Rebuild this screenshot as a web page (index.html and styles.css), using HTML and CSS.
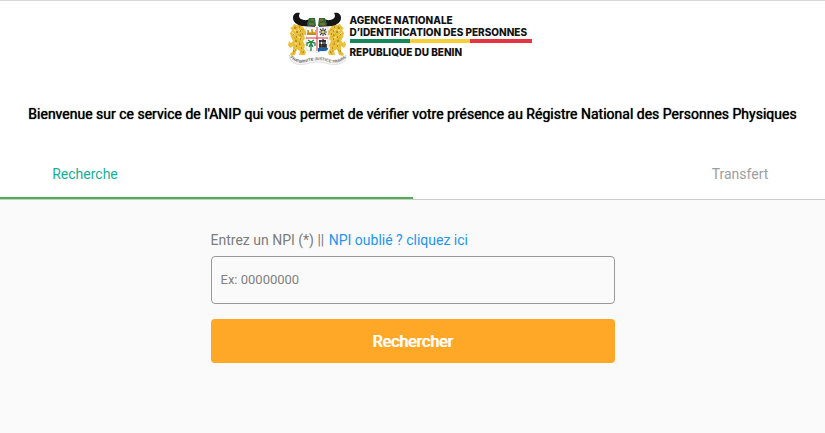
FILE: index.html
```
<!DOCTYPE html>
<html lang="fr">
<head>
    <meta charset="UTF-8">
    <meta name="viewport" content="width=device-width, initial-scale=1.0">
    <title>ANIP - Recherche NPI</title>
    <link rel="stylesheet" href="styles.css">
</head>
<body>
    <header>
        <div class="logo">
            <svg class="emblem" viewBox="0 0 60 54" aria-hidden="true">
                <defs>
                    <path id="motto" d="M1 44 Q8 53 18 50 Q30 46 41 50 Q52 53 59 44"/>
                    <g id="horn">
                        <path d="M12 1 C8 0 5 2 5 6 C5 10 9 13 14 14 L27 15 L27 8 C24 5 21 9 16 8 C11 7 10 4 12 1Z" fill="#151515"/>
                    </g>
                    <g id="leopard">
                        <path d="M6 12 L9 13 L13 12 L15 15 L17 18 L19 20 L18 23 L16 23 L17 27 L15 29 L17 33 L16 37 L18 40 L17 43 L11 43 L12 39 L9 37 L7 43 L3 44 L2 42 L5 39 L5 34 L2 36 L0 33 L1 29 L3 31 L5 29 L3 25 L2 21 L4 18 L2 16 L4 15Z" fill="#eac13a"/>
                        <path d="M6 16h2M11 15h1M8 20h2M5 22h1M12 19h1M14 22h1M8 25h1M12 27h1M7 29h2M11 32h1M8 34h1M13 36h1M15 40h1M5 39h1M12 23h1" stroke="#8a6414" stroke-width="1"/>
                        <path d="M7 14l2 2M13 17l3 1M10 22l4 3M6 25l3 4M11 29l2 4M8 37l-3 5M13 38l2 4" stroke="#c9951f" stroke-width=".7"/>
                        <path d="M6 18l2 1M10 17l2 2M4 20l3 3M10 25l2 1M7 31l2 1" stroke="#fbeb9a" stroke-width=".9"/>
                    </g>
                </defs>
                <use href="#leopard"/>
                <use href="#leopard" transform="translate(58 0) scale(-1 1)"/>
                <use href="#horn"/>
                <use href="#horn" transform="translate(58 0) scale(-1 1)"/>
                <path d="M19 12 L21 6 L27 6 L28 14 L20 14Z M39 12 L37 6 L31 6 L30 14 L38 14Z" fill="#2d6b38"/>
                <path d="M21 12h5M23 8h3M32 8h3M32 12h5" stroke="#a06a2b" stroke-width="1.4"/>
                <path d="M18 15 H40 V36 Q40 39 37 39 H32 L29 41 L26 39 H21 Q18 39 18 36Z" fill="#fff" stroke="#bbb" stroke-width=".5"/>
                <path d="M19 23V18h2v2h2v-3h2v3h2v-2h1v5Z" fill="#e6ae28"/>
                <path d="M19 22h9M20 20h1M24 20h1" stroke="#8a6414" stroke-width=".8"/>
                <path d="M35 16v8M31 20h8M32 17l6 6M38 17l-6 6" stroke="#33424e" stroke-width="1.1"/>
                <circle cx="35" cy="20" r="1.6" fill="#eec744"/>
                <path d="M29 15v24M18 26h22" stroke="#d9303e" stroke-width="1"/>
                <path d="M23 30v9M23 30l-4 1v3M23 30l4 1v3M23 30l-3-2M23 30l3-2M23 31l-2 4M23 31l2 4" fill="none" stroke="#238446" stroke-width="1.3"/>
                <path d="M30 36H40V37Q39 39 37 39H32L30 40Z" fill="#1d63aa"/>
                <path d="M31 29h7M31 33h8M31 35h8M32 28v7M35 27v8M37 28v7" stroke="#17191c" stroke-width="1.3"/>
                <path d="M1 43 Q8 51 18 48 Q30 44 41 48 Q52 51 58 43 L57 49 Q51 54 41 52 Q30 48 18 52 Q8 54 3 49Z" fill="#f5f5f5" stroke="#bbb" stroke-width=".4"/>
                <text class="motto"><textPath href="#motto" startOffset="2">FRATERNITE JUSTICE TRAVAIL</textPath></text>
            </svg>
            <div class="logo-text">
                <span>AGENCE NATIONALE</span>
                <span>D’IDENTIFICATION DES PERSONNES</span>
                <div class="flag"></div>
                <span>REPUBLIQUE DU BENIN</span>
            </div>
        </div>
        <h1>Bienvenue sur ce service de l'ANIP qui vous permet de vérifier votre présence au Régistre National des Personnes Physiques</h1>
        <nav class="tabs">
            <button type="button" class="tab active">Recherche</button>
            <button type="button" class="tab">Transfert</button>
        </nav>
    </header>
    <main>
        <form id="search-form">
            <div class="label-row">
                <label for="npi">Entrez un NPI (*) ||</label>
                <a href="#">NPI oublié ? cliquez ici</a>
            </div>
            <input type="text" id="npi" placeholder="Ex: 00000000" required>
            <button type="submit" class="search-button">Rechercher</button>
        </form>
    </main>
</body>
</html>
```
FILE: styles.css
```
* {
    box-sizing: border-box;
}
body {
    font-family: Roboto, sans-serif;
    font-size: 14px;
    background-color: #fafafa;
    margin: 0;
}
header {
    background: white;
    border-top: 1px solid #d8d8d8;
}
.logo {
    display: flex;
    justify-content: center;
    gap: 2px;
    padding: 11px 6px 0 0;
}
.emblem {
    width: 60px;
    height: 54px;
}
.motto {
    font-family: "Liberation Sans", sans-serif;
    font-size: 4px;
    fill: #333;
}
.logo-text {
    display: flex;
    flex-direction: column;
    min-width: 182px;
    padding-top: 2px;
    font-family: Inter, sans-serif;
    font-size: 10px;
    font-weight: 800;
    line-height: 12px;
    color: #111;
}
.flag {
    height: 4px;
    margin: 1px 0 3px;
    background: linear-gradient(to right, #15895a 33%, #f7cd3c 33%, #f7cd3c 66%, #e43540 66%);
}
h1 {
    margin: 0;
    padding: 38px 16px 0;
    font-size: 14px;
    font-weight: 400;
    line-height: 20px;
    text-align: center;
    color: black;
    text-shadow: 0 0 1px black;
}
.tabs {
    display: flex;
    justify-content: space-between;
    position: relative;
    margin-top: 24px;
    border-bottom: 1px solid #ccc;
}
.tabs::after {
    content: "";
    position: absolute;
    left: 0;
    bottom: 0;
    width: 50%;
    height: 2px;
    background: #4caf50;
}
.tab {
    width: 170px;
    height: 51px;
    padding: 1px 0 0;
    border: none;
    background: none;
    font: inherit;
    color: #9e9e9e;
    cursor: pointer;
}
.tab.active {
    color: #12b096;
}
form {
    display: flex;
    flex-direction: column;
    width: 49%;
    max-width: 404px;
    margin: 0 auto;
    padding-top: 30px;
}
.label-row {
    line-height: 20px;
    color: #7c7c7c;
}
a {
    margin-left: 1px;
    color: #2196f3;
    text-decoration: none;
}
input {
    height: 48px;
    margin: 6px 0 15px;
    padding: 0 9px 1px;
    border: 1px solid #999;
    border-radius: 4px;
    background: transparent;
    font-family: inherit;
    font-size: 13px;
}
input::placeholder {
    color: #808080;
}
.search-button {
    height: 44px;
    border: none;
    border-radius: 4px;
    background: #ffa726;
    font-family: inherit;
    font-size: 16px;
    font-weight: 400;
    color: white;
    text-shadow: 1px 0 white;
    cursor: pointer;
}
```
